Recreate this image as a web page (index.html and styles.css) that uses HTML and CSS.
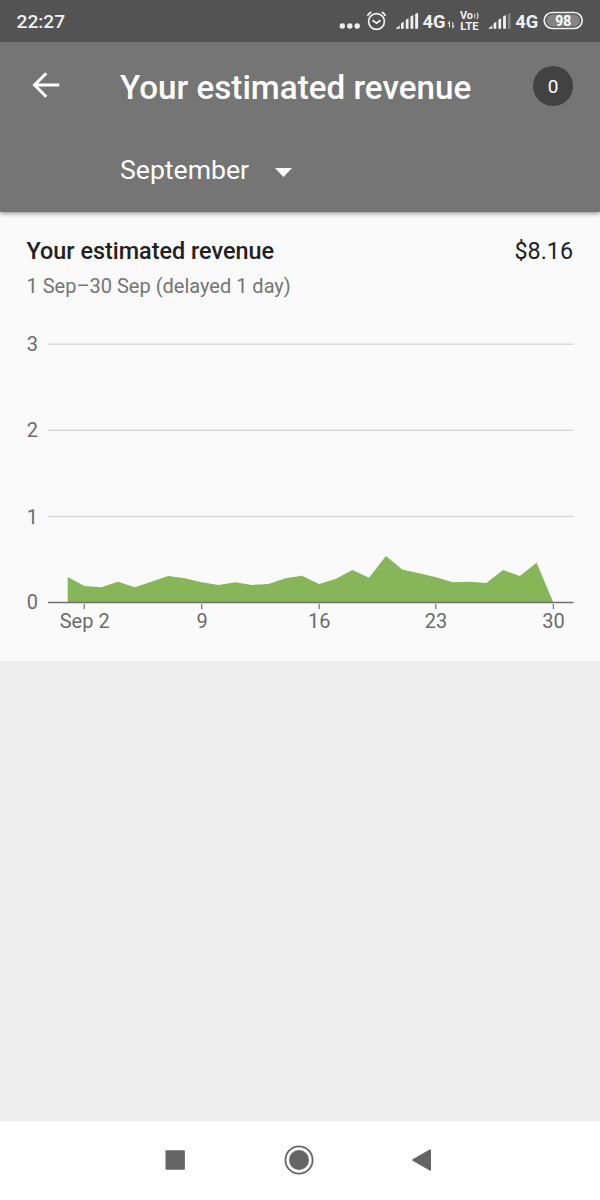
FILE: index.html
```html
<!DOCTYPE html>
<html lang="en">
<head>
<meta charset="utf-8">
<title>Your estimated revenue</title>
<link rel="stylesheet" href="styles.css">
</head>
<body>
<div class="screen">
  <div class="status-bar">
    <span class="clock">22:27</span>
    <svg class="status-icons" width="250" height="42" viewBox="336 0 250 42">
      <g class="fill-light">
        <circle cx="342.3" cy="26" r="2.7"/><circle cx="349.8" cy="26" r="2.7"/><circle cx="357.2" cy="26" r="2.7"/>
        <path d="M395.300 28.700l4.400-3.200v3.200zM401 28.700v-5.200l2.700-2v7.200zM405.800 28.700v-9l2.700-1.500v10.500zM410.500 28.700V16.500l2.800-1.500v13.700zM415.200 28.700V14l2.900-1.200v15.900z"/>
        <path d="M488 28.700l4.300-3.200v3.200zM493.600 28.700v-5.200l2.700-2v7.200zM498.400 28.700v-9l2.700-1.500v10.500zM503.100 28.700V16.500l2.800-1.500v13.700z"/>
        <path class="dim" d="M507.800 28.700V14l2.700-1.200v15.900z"/>
      </g>
      <g class="stroke-light">
        <circle cx="376.500" cy="21.500" r="7.900"/>
        <path d="M372.500 20.300l4 3 4-3M367.500 15.800c.8-1.600 2.100-2.800 3.800-3.700M385.500 15.800c-.8-1.600-2.100-2.800-3.800-3.700"/>
      </g>
      <path class="data-arrows" d="M449.500 27.500v-5.500l-1.500 2M452.800 22v5.500l1.500-2"/>
      <text class="network" x="422.500" y="28.300" textLength="23" lengthAdjust="spacingAndGlyphs">4G</text>
      <text class="volte" x="460" y="19.300" textLength="13" lengthAdjust="spacingAndGlyphs">Vo</text>
      <path class="waves" d="M474.300 14q1.500 2 0 4.200M476.800 12.800q2.500 3.200 0 6.400"/>
      <text class="volte" x="460.300" y="29.600" textLength="18.300" lengthAdjust="spacingAndGlyphs">LTE</text>
      <text class="network" x="515.300" y="28.300" textLength="23" lengthAdjust="spacingAndGlyphs">4G</text>
      <rect class="battery" x="544.200" y="12.500" width="38" height="16" rx="8"/>
      <rect class="battery-level" x="546.500" y="14.500" width="33.500" height="12" rx="6"/>
      <text class="percent" x="555.200" y="25.800" textLength="16" lengthAdjust="spacingAndGlyphs">98</text>
    </svg>
  </div>

  <header class="app-bar">
    <div class="title-row">
      <svg class="back" width="28" height="28" viewBox="0 0 28 28"><path d="M27.300 14H3M14.300 2.200L2.500 14l11.800 11.800"/></svg>
      <h1 class="title">Your estimated revenue</h1>
      <span class="count">0</span>
    </div>
    <div class="period">
      <span>September</span>
      <svg width="17" height="9" viewBox="0 0 17 9"><path class="caret" d="M0 0h17L8.500 9z"/></svg>
    </div>
  </header>

  <main class="card">
    <div class="card-head">
      <h2 class="card-title">Your estimated revenue</h2>
      <span class="amount">$8.16</span>
    </div>
    <p class="range">1 Sep–30 Sep (delayed 1 day)</p>
    <svg class="chart" width="600" height="320" viewBox="0 320 600 320">
      <path class="grid" d="M48 344.300H573.500M48 430.200H573.500M48 516.500H573.500"/>
      <polygon class="area" points="67.700,602.500 67.700,577 84.400,586 101.200,587.300 117.900,581.700 134.700,587.300 151.400,581.700 168.200,576 184.900,578.300 201.700,582.300 218.400,585 235.200,582.300 251.900,585 268.600,584 285.400,578.300 302.100,575.700 318.900,584 335.600,579 352.400,570 369.100,577.700 385.900,556 402.600,569.700 419.300,573.300 436.100,577.300 452.800,582.300 469.600,581.700 486.300,583 503.100,570 519.800,576 536.600,562.700 553.300,602.500"/>
      <path class="axis" d="M48 602.500H573.500"/>
      <path class="ticks" d="M84.300 604v5M201.700 604v5M319.200 604v5M435.800 604v5M553.400 604v5"/>
      <g class="labels">
        <text x="32.300" y="351">3</text>
        <text x="32.300" y="437">2</text>
        <text x="32.300" y="523.500">1</text>
        <text x="32.300" y="609">0</text>
        <text x="84.700" y="628">Sep 2</text>
        <text x="202" y="628">9</text>
        <text x="319.300" y="628">16</text>
        <text x="436" y="628">23</text>
        <text x="553.400" y="628">30</text>
      </g>
    </svg>
  </main>

  <nav class="nav-bar">
    <svg width="30" height="30" viewBox="0 0 30 30"><rect class="key" x="5.500" y="5.300" width="19.400" height="19.400" rx="1"/></svg>
    <svg width="30" height="30" viewBox="0 0 30 30"><circle class="key" cx="15" cy="15" r="10"/><circle class="key-ring" cx="15" cy="15" r="13.600"/></svg>
    <svg width="30" height="30" viewBox="0 0 30 30"><path class="key" d="M5.600 14.300L22.700 4.500q1.300-.6 1.300.7v19.600q0 1.300-1.300.7L5.600 15.700q-1-.7 0-1.400z"/></svg>
  </nav>
</div>
</body>
</html>
```
FILE: styles.css
```css
* { box-sizing: border-box; }
body { margin: 0; font-family: Roboto, "Liberation Sans", sans-serif; }
h1, h2, p { margin: 0; }
svg { display: block; flex: none; }

.screen {
  width: 600px;
  height: 1200px;
  display: flex;
  flex-direction: column;
  background: #ededed;
  overflow: hidden;
}

.status-bar {
  height: 42px;
  flex: none;
  position: relative;
  z-index: 1;
  display: flex;
  align-items: center;
  justify-content: space-between;
  padding: 0 14px 0 16.5px;
  background: #535353;
}
.clock { padding-top: 1px; font-size: 19.2px; font-weight: 500; color: #f0f0f0; }
.fill-light { fill: #f0f0f0; }
.dim { fill: #858585; }
.stroke-light { fill: none; stroke: #f0f0f0; stroke-width: 1.7; }
.data-arrows, .waves { fill: none; stroke: #e0e0e0; stroke-width: 1.1; }
.network { font-size: 18px; font-weight: 700; fill: #f0f0f0; }
.volte { font-size: 10px; font-weight: 700; fill: #f0f0f0; }
.battery { fill: none; stroke: #f0f0f0; stroke-width: 1.7; }
.battery-level { fill: #858585; }
.percent { font-size: 15px; font-weight: 700; fill: #fff; }

.app-bar {
  height: 170px;
  flex: none;
  position: relative;
  padding: 24px 27px 0 32px;
  color: #fff;
  background: #757575;
  box-shadow: 0 1px 5px rgba(0, 0, 0, 0.5);
}
.title-row { display: flex; align-items: center; height: 40px; }
.back { margin-top: -2px; fill: none; stroke: #fff; stroke-width: 3; }
.title { margin-left: 60px; padding-top: 3px; font-size: 33.2px; font-weight: 500; line-height: 40px; white-space: nowrap; }
.count {
  width: 40px;
  height: 40px;
  margin-left: auto;
  border-radius: 50%;
  background: #424242;
  font-size: 19px;
  line-height: 42px;
  text-align: center;
}
.period {
  display: flex;
  align-items: center;
  gap: 25.5px;
  margin: 48px 0 0 88px;
  font-size: 26.6px;
  line-height: 32px;
}
.period svg { margin-top: 5px; }
.caret { fill: #fff; }

.card { height: 449px; flex: none; background: #fafafa; }
.card-head {
  display: flex;
  justify-content: space-between;
  padding: 25px 27px 0 26.5px;
  line-height: 28px;
  color: #212121;
}
.card-title { font-size: 23.4px; font-weight: 500; }
.amount { font-size: 23.3px; }
.range { padding: 9px 26.5px 0; font-size: 20px; line-height: 24px; color: #757575; }
.chart { margin-top: 22px; }
.grid { stroke: #d9d9d9; stroke-width: 1.5; }
.area { fill: #87b659; }
.axis { stroke: #707070; stroke-width: 1.4; }
.ticks { stroke: #808080; stroke-width: 1.3; }
.labels { font-size: 20px; fill: #6c6c6c; text-anchor: middle; }

.nav-bar {
  height: 79px;
  margin-top: auto;
  flex: none;
  display: flex;
  justify-content: space-between;
  align-items: center;
  padding: 0 163px 1px 160px;
  background: #fff;
}
.key { fill: #656565; }
.key-ring { fill: none; stroke: #656565; stroke-width: 1.8; }
```
